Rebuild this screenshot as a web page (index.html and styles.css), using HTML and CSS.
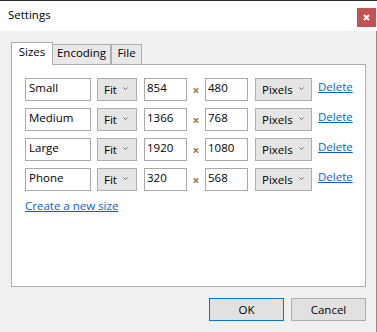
FILE: index.html
```html
<!DOCTYPE html>
<html lang="en">
<head>
    <meta charset="UTF-8">
    <title>Settings</title>
    <link rel="stylesheet" href="styles.css">
</head>
<body>
    <div class="window">
        <div class="titlebar">
            <span class="title">Settings</span>
            <button class="close" title="Close">
                <svg width="7" height="7" viewBox="0 0 7 7"><path d="M1 1L6 6M6 1L1 6" stroke="#fff" stroke-width="2"/></svg>
            </button>
        </div>

        <div class="content">
            <div class="tabs">
                <div class="tab active">Sizes</div>
                <div class="tab encoding">Encoding</div>
                <div class="tab file">File</div>
            </div>

            <div class="panel">
                <div class="row">
                    <input class="name" type="text" value="Small">
                    <div class="combo fit"><span>Fit</span><svg width="5" height="3" viewBox="0 0 5 3"><path d="M0.5 0.5L2.5 2.5L4.5 0.5" fill="none" stroke="#6a6a6a"/></svg></div>
                    <input class="num" type="text" value="854">
                    <span class="times">×</span>
                    <input class="num" type="text" value="480">
                    <div class="combo unit"><span>Pixels</span><svg width="5" height="3" viewBox="0 0 5 3"><path d="M0.5 0.5L2.5 2.5L4.5 0.5" fill="none" stroke="#6a6a6a"/></svg></div>
                    <a href="#" class="link delete">Delete</a>
                </div>
                <div class="row">
                    <input class="name" type="text" value="Medium">
                    <div class="combo fit"><span>Fit</span><svg width="5" height="3" viewBox="0 0 5 3"><path d="M0.5 0.5L2.5 2.5L4.5 0.5" fill="none" stroke="#6a6a6a"/></svg></div>
                    <input class="num" type="text" value="1366">
                    <span class="times">×</span>
                    <input class="num" type="text" value="768">
                    <div class="combo unit"><span>Pixels</span><svg width="5" height="3" viewBox="0 0 5 3"><path d="M0.5 0.5L2.5 2.5L4.5 0.5" fill="none" stroke="#6a6a6a"/></svg></div>
                    <a href="#" class="link delete">Delete</a>
                </div>
                <div class="row">
                    <input class="name" type="text" value="Large">
                    <div class="combo fit"><span>Fit</span><svg width="5" height="3" viewBox="0 0 5 3"><path d="M0.5 0.5L2.5 2.5L4.5 0.5" fill="none" stroke="#6a6a6a"/></svg></div>
                    <input class="num" type="text" value="1920">
                    <span class="times">×</span>
                    <input class="num" type="text" value="1080">
                    <div class="combo unit"><span>Pixels</span><svg width="5" height="3" viewBox="0 0 5 3"><path d="M0.5 0.5L2.5 2.5L4.5 0.5" fill="none" stroke="#6a6a6a"/></svg></div>
                    <a href="#" class="link delete">Delete</a>
                </div>
                <div class="row">
                    <input class="name" type="text" value="Phone">
                    <div class="combo fit"><span>Fit</span><svg width="5" height="3" viewBox="0 0 5 3"><path d="M0.5 0.5L2.5 2.5L4.5 0.5" fill="none" stroke="#6a6a6a"/></svg></div>
                    <input class="num" type="text" value="320">
                    <span class="times">×</span>
                    <input class="num" type="text" value="568">
                    <div class="combo unit"><span>Pixels</span><svg width="5" height="3" viewBox="0 0 5 3"><path d="M0.5 0.5L2.5 2.5L4.5 0.5" fill="none" stroke="#6a6a6a"/></svg></div>
                    <a href="#" class="link delete">Delete</a>
                </div>
                <a href="#" class="link create">Create a new size</a>
            </div>

            <div class="buttons">
                <button class="btn default">OK</button>
                <button class="btn">Cancel</button>
            </div>
        </div>
    </div>
</body>
</html>
```

FILE: styles.css
```css
body {
    margin: 0;
    font-family: 'Open Sans', 'Noto Sans', sans-serif;
    font-size: 11.5px;
    color: #000;
    background-color: #f0f0f0;
}
.window {
    width: 377px;
    height: 332px;
    display: flex;
    flex-direction: column;
    box-sizing: border-box;
    border-top: 1px solid #2b2b2b;
    background-color: #fff;
}
.titlebar {
    height: 30px;
    display: flex;
    align-items: flex-start;
    padding-left: 8px;
}
.title {
    line-height: 16px;
    margin-top: 6px;
}
.close {
    margin: 7px 1px 0 auto;
    width: 19px;
    height: 19px;
    padding: 0;
    border: none;
    background-color: #c75050;
    display: flex;
    align-items: center;
    justify-content: center;
}
.content {
    flex: 1;
    display: flex;
    flex-direction: column;
    padding: 11px 10px 0 11px;
    background-color: #f0f0f0;
    border-right: 1px solid #8e8e8e;
}
.tabs {
    display: flex;
    align-items: flex-end;
    height: 23px;
    margin-bottom: -1px;
}
.tab {
    box-sizing: border-box;
    height: 20px;
    margin-bottom: 1px;
    line-height: 16px;
    text-align: center;
    border: 1px solid #adadad;
    border-bottom: none;
    background-color: #e8e8e8;
}
.tab.active {
    position: relative;
    z-index: 1;
    width: 42px;
    height: 23px;
    margin-bottom: 0;
    padding-top: 1px;
    background-color: #fff;
}
.tab.encoding {
    width: 58px;
    border-left: none;
}
.tab.file {
    width: 31px;
}
.panel {
    box-sizing: border-box;
    width: 355px;
    height: 223px;
    padding: 13px 0 0 13px;
    border: 1px solid #adadad;
    background-color: #fff;
}
.row {
    display: flex;
    align-items: flex-start;
    height: 23px;
    margin-bottom: 7px;
}
.row input {
    box-sizing: border-box;
    height: 23px;
    margin: 0;
    padding: 0 2px 4px 2px;
    border: 1px solid #a9a9a9;
    font-family: inherit;
    font-size: inherit;
    line-height: 16px;
    color: #000;
    outline: none;
}
.row input.name {
    width: 66px;
    padding-left: 3px;
    margin-right: 6px;
}
.row input.num {
    width: 43px;
}
.combo {
    box-sizing: border-box;
    height: 23px;
    display: flex;
    justify-content: space-between;
    align-items: flex-start;
    padding: 3px 7px 0 6px;
    line-height: 16px;
    border: 1px solid #adadad;
    background-color: #e5e5e5;
}
.combo svg {
    margin-top: 5px;
}
.combo.fit {
    width: 40px;
    margin-right: 7px;
    padding-right: 8px;
}
.combo.unit {
    width: 57px;
    margin-left: 7px;
    margin-right: 6px;
}
.times {
    width: 18px;
    height: 23px;
    padding-top: 1px;
    box-sizing: border-box;
    display: flex;
    align-items: center;
    justify-content: center;
    font-size: 12px;
    font-weight: bold;
    color: #9a7a40;
}
.link {
    color: #0066cc;
    text-decoration: underline;
    line-height: 16px;
}
.delete {
    padding-top: 1px;
}
.create {
    display: inline-block;
}
.buttons {
    display: flex;
    justify-content: flex-end;
    gap: 7px;
    margin-top: 11px;
}
.btn {
    box-sizing: border-box;
    width: 75px;
    height: 23px;
    padding: 0;
    font-family: inherit;
    font-size: inherit;
    line-height: 16px;
    color: #000;
    border: 1px solid #adadad;
    background-color: #e1e1e1;
}
.btn.default {
    border-color: #0078d7;
}
```
